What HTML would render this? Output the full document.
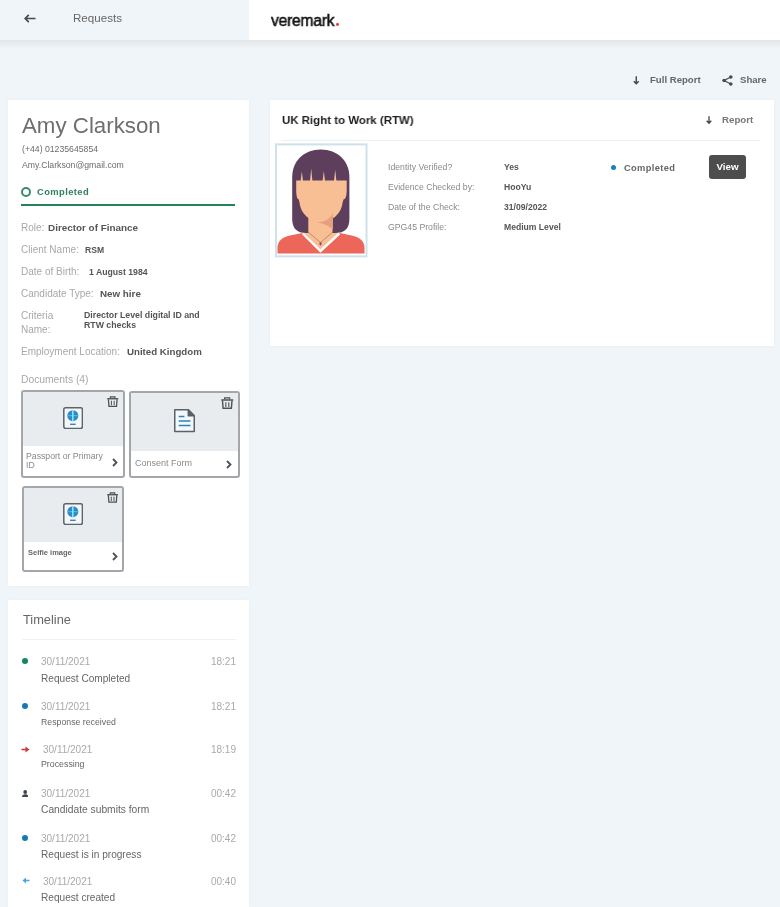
<!DOCTYPE html>
<html><head><meta charset="utf-8">
<style>
*{margin:0;padding:0;box-sizing:border-box}
html,body{width:780px;height:907px;overflow:hidden}
body{background:#f0f5f9;font-family:"Liberation Sans",sans-serif;position:relative;color:#555}
.a{position:absolute;white-space:nowrap;line-height:12px;will-change:transform}
.hdr-l{position:absolute;left:0;top:0;width:249px;height:40px;background:#f0f5f9}
.hdr-r{position:absolute;left:249px;top:0;width:531px;height:40px;background:#fff}
.hdr-sh{position:absolute;left:0;top:40px;width:780px;height:9px;background:linear-gradient(#e2e6e9,#f0f5f9)}
.card{position:absolute;background:#fff;box-shadow:0 0 3px rgba(120,140,160,0.07)}
.lbl{color:#a8a8a8;font-size:10px}
.val{color:#555;font-weight:bold}
.doc{position:absolute;border:2px solid #a3a7ab;border-radius:3px;background:#fff;overflow:hidden}
.doc .top{position:absolute;left:0;top:0;right:0;background:#e9ecef}
.tl-date{color:#a9a9a9;font-size:10px}
.tl-time{color:#a9a9a9;font-size:10px;text-align:right}
.tl-txt{color:#666;font-size:10px}
</style></head><body>
<div class="hdr-l"></div>
<div class="hdr-r"></div>
<div class="hdr-sh"></div>

<!-- header -->
<svg class="a" style="left:24px;top:14px" width="12" height="9" viewBox="0 0 12 9"><path d="M11.5 4.5H1.2M4.8 0.8L1.2 4.5l3.6 3.7" fill="none" stroke="#4a4a4a" stroke-width="1.7"/></svg>
<div class="a" style="left:73px;top:12px;font-size:11.6px;color:#666">Requests</div>
<div class="a" style="left:270.5px;top:11px;line-height:20px;font-size:17px;color:#151515;-webkit-text-stroke:0.6px #151515;letter-spacing:-0.25px;transform:scaleX(0.92);transform-origin:0 0">veremark</div>
<div class="a" style="left:336.2px;top:23.4px;width:2.9px;height:2.9px;border-radius:50%;background:#e23d48"></div>

<!-- top actions -->
<svg class="a" style="left:632.7px;top:76.3px" width="6.5" height="8.5" viewBox="0 0 6.5 8.5"><path d="M3.25 0.3V7.8M0.8 5.2L3.25 7.8l2.45-2.6" fill="none" stroke="#444" stroke-width="1.4"/></svg>
<div class="a" style="left:649.5px;top:74px;font-size:9.6px;color:#666;font-weight:bold">Full Report</div>
<svg class="a" style="left:721.5px;top:75px" width="11" height="11" viewBox="0 0 11 11"><circle cx="8.8" cy="2" r="1.8" fill="#4a4a4a"/><circle cx="2.1" cy="5.5" r="1.8" fill="#4a4a4a"/><circle cx="8.8" cy="9" r="1.8" fill="#4a4a4a"/><path d="M8.8 2L2.1 5.5l6.7 3.5" fill="none" stroke="#4a4a4a" stroke-width="1.2"/></svg>
<div class="a" style="left:740px;top:74px;font-size:9.6px;color:#666;font-weight:bold">Share</div>

<!-- left card -->
<div class="card" style="left:8px;top:100px;width:241px;height:486px"></div>
<div class="a" style="left:21.8px;top:112.5px;line-height:26px;font-size:22.3px;color:#6e6e6e">Amy Clarkson</div>
<div class="a" style="left:22px;top:143px;font-size:8.7px;color:#6c6c6c">(+44) 01235645854</div>
<div class="a" style="left:22px;top:158.5px;font-size:8.7px;color:#6c6c6c">Amy.Clarkson@gmail.com</div>
<div class="a" style="left:21px;top:186.5px;width:10px;height:10px;border:2px solid #3a8a69;border-radius:50%"></div>
<div class="a" style="left:37px;top:185.5px;font-size:9.4px;letter-spacing:0.4px;color:#2f7f5d;font-weight:bold">Completed</div>
<div class="a" style="left:21px;top:203.5px;width:214px;height:2px;background:#23845a"></div>

<div class="a lbl" style="left:21px;top:221.7px">Role:</div>
<div class="a val" style="left:48px;top:221.7px;font-size:9.9px">Director of Finance</div>
<div class="a lbl" style="left:21px;top:244.2px">Client Name:</div>
<div class="a val" style="left:85px;top:244.2px;font-size:8.6px">RSM</div>
<div class="a lbl" style="left:21px;top:266.2px">Date of Birth:</div>
<div class="a val" style="left:88.5px;top:266.2px;font-size:8.7px">1 August 1984</div>
<div class="a lbl" style="left:21px;top:287.7px">Candidate Type:</div>
<div class="a val" style="left:99.5px;top:287.7px;font-size:9.8px">New hire</div>
<div class="a lbl" style="left:21px;top:310.2px">Criteria</div>
<div class="a lbl" style="left:21px;top:323.7px">Name:</div>
<div class="a val" style="left:84px;top:310.2px;font-size:8.75px;line-height:10px">Director Level digital ID and<br>RTW checks</div>
<div class="a lbl" style="left:21px;top:346.2px">Employment Location:</div>
<div class="a val" style="left:126.5px;top:346.2px;font-size:9.7px">United Kingdom</div>
<div class="a lbl" style="left:21px;top:374px;font-size:10.3px">Documents (4)</div>

<!-- docs -->
<div class="doc" style="left:21px;top:390px;width:104px;height:88px"><div class="top" style="height:54.4px"></div></div>
<div class="doc" style="left:129.2px;top:391px;width:110.8px;height:87px"><div class="top" style="height:58px"></div></div>
<div class="doc" style="left:22px;top:486px;width:102px;height:86px"><div class="top" style="height:53.5px"></div></div>

<svg class="a" style="left:107px;top:396px" width="11.5" height="11.0" viewBox="0 0 12.5 12"><path d="M3.7 2.2V0.9H8.6V2.2" fill="none" stroke="#505050" stroke-width="1.3"/><path d="M0.3 3H12.2" stroke="#505050" stroke-width="1.5"/><path d="M1.5 3.5L2.1 11.3H10.4L11 3.5" fill="none" stroke="#505050" stroke-width="1.4"/><path d="M4.8 5.2V10M7.8 5.2V10" stroke="#505050" stroke-width="1.1"/></svg>
<svg class="a" style="left:63px;top:407px" width="20" height="22" viewBox="0 0 20 22"><rect x="0.8" y="0.8" width="18.6" height="20.6" rx="1.8" fill="#f4f7fa" stroke="#5c636b" stroke-width="1.5"/><circle cx="9.8" cy="8.65" r="5.5" fill="#2a8bc9"/><path d="M4.3 8.65h11" stroke="#58b6e8" stroke-width="1.1"/><path d="M9.8 3.3v10.7" stroke="#9be6ff" stroke-width="1.5"/><path d="M7.1 17.3h5.6" stroke="#2a7fb8" stroke-width="1.3"/></svg>
<div class="a" style="left:26px;top:452px;font-size:8.7px;line-height:8.6px;color:#888">Passport or Primary<br>ID</div>
<svg class="a" style="left:111.8px;top:457.5px" width="6" height="9" viewBox="0 0 6 9"><path d="M1 1l3.5 3.5L1 8" fill="none" stroke="#505050" stroke-width="1.8"/></svg>
<svg class="a" style="left:220.5px;top:397.2px" width="12.5" height="12.0" viewBox="0 0 12.5 12"><path d="M3.7 2.2V0.9H8.6V2.2" fill="none" stroke="#505050" stroke-width="1.3"/><path d="M0.3 3H12.2" stroke="#505050" stroke-width="1.5"/><path d="M1.5 3.5L2.1 11.3H10.4L11 3.5" fill="none" stroke="#505050" stroke-width="1.4"/><path d="M4.8 5.2V10M7.8 5.2V10" stroke="#505050" stroke-width="1.1"/></svg>
<svg class="a" style="left:174px;top:408.5px" width="21" height="24" viewBox="0 0 21 24"><path d="M0.75 0.75H14.3L20.25 6.8V22.5H0.75Z" fill="#f2f8fb" stroke="#5c6168" stroke-width="1.5" stroke-linejoin="round"/><path d="M14.3 0.75V6.8H20.25Z" fill="#5c6168" stroke="#5c6168" stroke-width="1.5" stroke-linejoin="round"/><path d="M4.7 7.6H10.4M4.7 11.9H16.5M4.7 16.4H16.5" stroke="#2f82b8" stroke-width="1.5"/></svg>
<div class="a" style="left:135px;top:456.8px;font-size:9px;color:#8a8a8a">Consent Form</div>
<svg class="a" style="left:225.8px;top:459.5px" width="6" height="9" viewBox="0 0 6 9"><path d="M1 1l3.5 3.5L1 8" fill="none" stroke="#505050" stroke-width="1.8"/></svg>
<svg class="a" style="left:106.5px;top:491.5px" width="11.2" height="10.8" viewBox="0 0 12.5 12"><path d="M3.7 2.2V0.9H8.6V2.2" fill="none" stroke="#505050" stroke-width="1.3"/><path d="M0.3 3H12.2" stroke="#505050" stroke-width="1.5"/><path d="M1.5 3.5L2.1 11.3H10.4L11 3.5" fill="none" stroke="#505050" stroke-width="1.4"/><path d="M4.8 5.2V10M7.8 5.2V10" stroke="#505050" stroke-width="1.1"/></svg>
<svg class="a" style="left:63px;top:502.5px" width="20" height="22" viewBox="0 0 20 22"><rect x="0.8" y="0.8" width="18.6" height="20.6" rx="1.8" fill="#f4f7fa" stroke="#5c636b" stroke-width="1.5"/><circle cx="9.8" cy="8.65" r="5.5" fill="#2a8bc9"/><path d="M4.3 8.65h11" stroke="#58b6e8" stroke-width="1.1"/><path d="M9.8 3.3v10.7" stroke="#9be6ff" stroke-width="1.5"/><path d="M7.1 17.3h5.6" stroke="#2a7fb8" stroke-width="1.3"/></svg>
<div class="a" style="left:27.8px;top:546.8px;font-size:7.5px;color:#666;font-weight:bold">Selfie image</div>
<svg class="a" style="left:112px;top:551.5px" width="6" height="9" viewBox="0 0 6 9"><path d="M1 1l3.5 3.5L1 8" fill="none" stroke="#505050" stroke-width="1.8"/></svg>
<!-- right card -->
<div class="card" style="left:270px;top:100px;width:504px;height:246px"></div>
<div class="a" style="left:281.5px;top:114px;font-size:11.8px;color:#1e1e1e;font-weight:bold;transform:scaleX(0.972);transform-origin:0 0">UK Right to Work (RTW)</div>
<svg class="a" style="left:705.7px;top:116px" width="6" height="8" viewBox="0 0 6 8"><path d="M3 0.3V7.3M0.7 4.8L3 7.3l2.3-2.5" fill="none" stroke="#444" stroke-width="1.3"/></svg>
<div class="a" style="left:721.5px;top:114px;font-size:9.7px;color:#777;font-weight:bold">Report</div>
<div class="a" style="left:281px;top:140px;width:479px;height:1px;background:#eef0f2"></div>

<svg class="a" style="left:272px;top:140px" width="100" height="122" viewBox="272 140 100 122">
<rect x="276" y="144.4" width="90.5" height="112" fill="#fff" stroke="#cde2ea" stroke-width="2"/>
<path d="M292.2,177 C292.2,161 304,149.4 320.8,149.4 C337.6,149.4 349.4,161 349.4,177 L349.4,219 Q349.4,233 335.4,233 L306.2,233 Q292.2,233 292.2,219 Z" fill="#5d3e5d"/>
<path d="M296.2,180.4 L346.7,180.4 L346.7,190 Q346.7,199 343.5,199.5 L342.7,202 C341.5,214 332,222 321,222 C310,222 300.5,214 299.4,202 L298.8,199.5 Q296.2,199 296.2,190 Z" fill="#f8bf95"/>
<path d="M300.6,181 L301.8,171.5 L303,181Z M310,181 L311.2,168.5 L312.4,181Z M322.6,181 L323.8,171 L325,181Z M334,181 L335.2,169.5 L336.4,181Z" fill="#f8bf95"/>
<path d="M308.3,212 L332.5,212 L332.5,236 L308.3,236 Z" fill="#f8bf95"/>
<path d="M317,222.2 C326,222 331,218 333,213 L333,229.5 C329,226 323,223 317,222.2 Z" fill="#e7a07d"/>
<path d="M277.5,253.5 L277.5,248 Q277.5,238 290,235.5 L302.3,232.9 L320.5,251.2 L339.8,232.9 L351.5,235.5 Q364.5,238 364.5,248 L364.5,253.5 Z" fill="#ec6659"/>
<path d="M302.3,232.9 L320.5,251 L339.8,232.9 Z" fill="#f8bf95"/>
<path d="M302.8,233.5 L320.5,251 L339.3,233.5" fill="none" stroke="#fff" stroke-width="2.4"/>
<path d="M307.5,231.5 L320.5,242.5 L333.5,231.5" fill="none" stroke="#7a5a52" stroke-width="0.5"/>
<ellipse cx="320.5" cy="243.8" rx="1.1" ry="1.8" fill="#b0347a"/>
</svg>
<div class="a" style="left:388px;top:160.5px;font-size:8.7px;color:#8a8a8a">Identity Verified?</div>
<div class="a" style="left:388px;top:181px;font-size:8.7px;color:#8a8a8a">Evidence Checked by:</div>
<div class="a" style="left:388px;top:201px;font-size:8.7px;color:#8a8a8a">Date of the Check:</div>
<div class="a" style="left:388px;top:220.8px;font-size:8.7px;color:#8a8a8a">GPG45 Profile:</div>
<div class="a val" style="left:503.5px;top:160.5px;font-size:8.6px">Yes</div>
<div class="a val" style="left:503.5px;top:181px;font-size:8.6px">HooYu</div>
<div class="a val" style="left:503.5px;top:201px;font-size:8.6px">31/09/2022</div>
<div class="a val" style="left:503.5px;top:220.8px;font-size:8.6px">Medium Level</div>

<div class="a" style="left:610.5px;top:164.5px;width:5px;height:5px;border-radius:50%;background:#1a7fc1"></div>
<div class="a" style="left:623.5px;top:161.5px;font-size:9.3px;letter-spacing:0.35px;color:#666;font-weight:bold">Completed</div>
<div class="a" style="left:709px;top:155px;width:37px;height:23.5px;background:#4d4d4d;border-radius:3px;color:#fff;font-weight:bold;font-size:9.8px;line-height:23.5px;text-align:center">View</div>

<!-- timeline card -->
<div class="card" style="left:8px;top:600px;width:241px;height:307px"></div>
<div class="a" style="left:22.5px;top:613px;font-size:12.8px;line-height:14px;color:#666">Timeline</div>
<div class="a" style="left:22px;top:639px;width:214px;height:1px;background:#eef0f2"></div>
<div class="a" style="left:21.5px;top:658.3px;width:6px;height:6px;border-radius:50%;background:#14865a"></div>
<div class="a tl-date" style="left:41.3px;top:656.3px">30/11/2021</div>
<div class="a tl-time" style="left:186px;width:50px;top:656.3px">18:21</div>
<div class="a tl-txt" style="left:41.3px;top:672.6px;font-size:10.1px">Request Completed</div>
<div class="a" style="left:21.5px;top:702.6px;width:6px;height:6px;border-radius:50%;background:#1379b5"></div>
<div class="a tl-date" style="left:41.3px;top:700.6px">30/11/2021</div>
<div class="a tl-time" style="left:186px;width:50px;top:700.6px">18:21</div>
<div class="a tl-txt" style="left:40.7px;top:715.5px;font-size:8.75px">Response received</div>
<svg class="a" style="left:21px;top:745.8px" width="9" height="7" viewBox="0 0 9 7"><path d="M0.5 3.5H6" stroke="#cc3a3a" stroke-width="1.6"/><path d="M4.5 0.5L8.5 3.5 4.5 6.5z" fill="#cc3a3a"/></svg>
<div class="a tl-date" style="left:42.7px;top:744.3px">30/11/2021</div>
<div class="a tl-time" style="left:186px;width:50px;top:744.3px">18:19</div>
<div class="a tl-txt" style="left:40.7px;top:758.0px;font-size:8.8px">Processing</div>
<svg class="a" style="left:21.6px;top:789.6px" width="6.4" height="7.2" viewBox="0 0 6.4 7.2"><circle cx="3.2" cy="2" r="1.9" fill="#3b4652"/><path d="M0 7.2C0 5.2 1.2 4.3 3.2 4.3S6.4 5.2 6.4 7.2z" fill="#3b4652"/></svg>
<div class="a tl-date" style="left:41.3px;top:787.7px">30/11/2021</div>
<div class="a tl-time" style="left:186px;width:50px;top:787.7px">00:42</div>
<div class="a tl-txt" style="left:41.3px;top:804.0px;font-size:10.25px">Candidate submits form</div>
<div class="a" style="left:21.5px;top:834.7px;width:6px;height:6px;border-radius:50%;background:#1379b5"></div>
<div class="a tl-date" style="left:41.3px;top:832.7px">30/11/2021</div>
<div class="a tl-time" style="left:186px;width:50px;top:832.7px">00:42</div>
<div class="a tl-txt" style="left:41.3px;top:848.8px;font-size:10.1px">Request is in progress</div>
<svg class="a" style="left:21.5px;top:877.1px" width="8" height="7" viewBox="0 0 8 7"><path d="M2.5 3.5H7.5" stroke="#45a9e0" stroke-width="1.6"/><path d="M4 0.5L0.5 3.5 4 6.5z" fill="#45a9e0"/></svg>
<div class="a tl-date" style="left:42.7px;top:875.6px">30/11/2021</div>
<div class="a tl-time" style="left:186px;width:50px;top:875.6px">00:40</div>
<div class="a tl-txt" style="left:41.3px;top:892.0px;font-size:10.1px">Request created</div>
</body></html>
